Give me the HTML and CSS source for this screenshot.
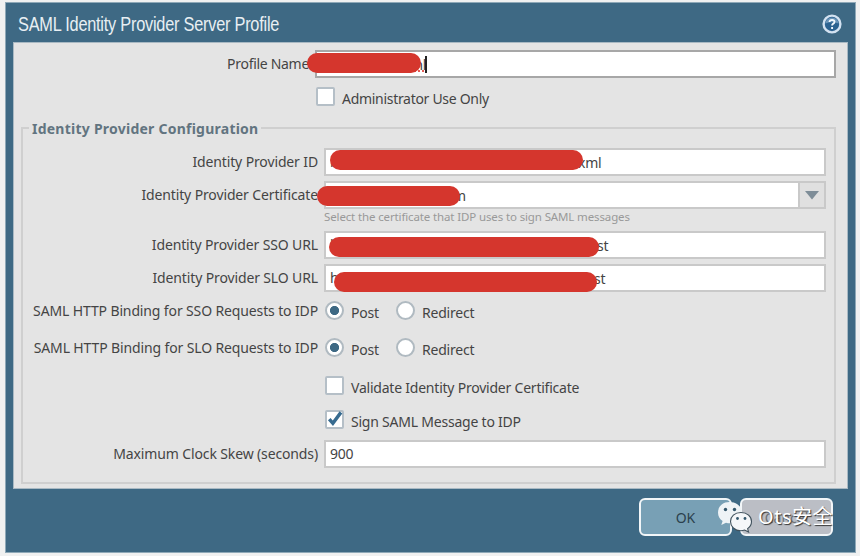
FILE: index.html
```html
<!DOCTYPE html>
<html lang="en">
<head>
<meta charset="utf-8">
<title>SAML Identity Provider Server Profile</title>
<link rel="stylesheet" href="styles.css">
</head>
<body>
<main class="dialog">
  <header class="titlebar">
    <h1><span class="title-text">SAML Identity Provider Server Profile</span></h1>
    <svg class="help" viewBox="0 0 20 20"><circle cx="10" cy="10" r="8.4" fill="#2b6290" stroke="#d3e2f1" stroke-width="2.4"/><path d="M3.400 9.500Q4 3.600 10 3.400 16 3.600 16.600 9.500 10 7 3.400 9.500" fill="#7fa6c6" opacity=".75"/><path d="M7.500 8Q7.700 5.900 10.100 5.900 12.600 6 12.500 8 12.400 9.200 11 9.900 10.100 10.400 10.100 11.600M10.100 13.100v1.800" fill="none" stroke="#f2f8fd" stroke-width="1.900"/></svg>
  </header>
  <section class="body">
    <div class="row profile">
      <label>Profile Name</label>
      <div class="field focus"><span class="tail t-profile">ml</span><i class="caret"></i><i class="squiggle"></i><i class="redact r-profile"></i></div>
    </div>
    <div class="row admin"><i class="box"></i><span class="opt">Administrator Use Only</span></div>
    <div class="group">
      <div class="legend"><span>Identity Provider Configuration</span></div>
      <div class="row id"><label>Identity Provider ID</label><div class="field"><span>h</span><span class="tail t-id">xml</span><i class="redact r-id"></i></div></div>
      <div class="row cert"><label>Identity Provider Certificate</label><div class="field"><span class="tail t-cert">m</span><i class="redact r-cert"></i><span class="trigger"><svg viewBox="0 0 14 9"><path d="M0 0h14L7 8.5z" fill="#7e8d98"/></svg></span></div></div>
      <div class="hint">Select the certificate that IDP uses to sign SAML messages</div>
      <div class="row sso"><label>Identity Provider SSO URL</label><div class="field"><span>h</span><span class="tail t-sso">st</span><i class="redact r-sso"></i></div></div>
      <div class="row slo"><label>Identity Provider SLO URL</label><div class="field"><span>h</span><span class="tail t-slo">st</span><i class="redact r-slo"></i></div></div>
      <div class="row radio1"><label>SAML HTTP Binding for SSO Requests to IDP</label><div class="options"><i class="radio on"></i><span class="opt post">Post</span><i class="radio"></i><span class="opt">Redirect</span></div></div>
      <div class="row radio2"><label>SAML HTTP Binding for SLO Requests to IDP</label><div class="options"><i class="radio on"></i><span class="opt post">Post</span><i class="radio"></i><span class="opt">Redirect</span></div></div>
      <div class="row check1"><label></label><div class="options"><i class="box"></i><span class="opt">Validate Identity Provider Certificate</span></div></div>
      <div class="row check2"><label></label><div class="options"><i class="box"><svg viewBox="0 0 20 20"><path d="M4.5 9.5 8.3 14 16.8 2.5" fill="none" stroke="#376b90" stroke-width="3.6"/></svg></i><span class="opt">Sign SAML Message to IDP</span></div></div>
      <div class="row skew"><label>Maximum Clock Skew (seconds)</label><div class="field"><span>900</span></div></div>
    </div>
  </section>
  <footer class="actions">
    <div class="button ok">OK</div>
    <div class="button cancel">Cancel</div>
    <div class="watermark">
      <svg viewBox="0 0 36 32"><path d="M12.5 1C5.5 1 1 5.6 1 11.5c0 3.8 1.8 6.7 4.6 8.5L4.3 24l4.7-2.3c1.2.4 2.7.5 4 .5C20 22 25 17.5 25 11.5S19.500 1 12.500 1z" fill="#eef3f6"/><path d="M24 11.500C17.600 11.500 13.500 15.500 13.500 20.500s4.100 9.200 10.300 9.200c1.400 0 2.700-.2 3.800-.6l4 2-1-3.500c2.500-1.700 3.900-4.200 3.900-7.100 0-5-4.300-9-10.500-9z" fill="#f5f7f9" stroke="#40515c" stroke-width="1.100"/><g fill="#34576c"><circle cx="8.500" cy="8.500" r="1.700"/><circle cx="17.500" cy="8.500" r="1.700"/><circle cx="20.500" cy="17.500" r="1.400"/><circle cx="28" cy="17.500" r="1.400"/></g></svg>
      <span>Ots安全</span>
    </div>
  </footer>
</main>
</body>
</html>
```

FILE: styles.css
```css
* { box-sizing: border-box; }
body { margin: 0; height: 556px; overflow: hidden; background: #f0f1f1; padding: 2px 0 0 5px; font: 14px/20px "Noto Sans", sans-serif; color: #444; }
i { display: block; font-style: normal; flex: none; }
svg { display: block; }
.dialog { width: 851px; height: 551px; background: #3e6984; border: 1px solid #8fa9b8; }
.titlebar { height: 39px; display: flex; align-items: center; justify-content: space-between; padding: 2px 13px 0 12px; }
h1 { margin: 0; font: 20.5px/26px "Liberation Sans", sans-serif; color: #e8eff3; white-space: nowrap; }
.title-text { display: block; letter-spacing: -.3px; transform: scaleX(.797); transform-origin: left; }
.help { width: 20px; height: 20px; }
.body { margin: 0 7px; height: 447px; background: #e4e4e4; border: 1px solid #a9b9c3; padding: 7px 11px 0 7px; }
.row { display: flex; align-items: center; white-space: nowrap; }
label { width: 295px; margin-right: 6px; text-align: right; letter-spacing: -.13px; flex: none; }
.field { position: relative; flex: 1; height: 28px; background: #fff; border: 2px solid #c9c9c9; display: flex; align-items: center; padding-left: 4px; letter-spacing: -.25px; }
.profile label { width: 288px; margin-right: 6px; letter-spacing: -.3px; }
.profile .field { border-color: #a7a7a7; }
.admin { margin: 8px 0 0 295px; height: 20px; }
.box { width: 19px; height: 19px; background: #fff; border: 2px solid #b5bfc7; border-radius: 2px; }
.box svg { width: 19px; height: 19px; margin: -2px; }
.opt { margin-left: 7px; padding-top: 5px; letter-spacing: -.22px; }
.admin .opt { letter-spacing: -.3px; }
.group { height: 357px; margin-top: 21px; border: 2px solid #cfcfcf; padding: 0 8px 0 0; }
.legend { height: 22px; margin: -10px 0 0 6px; display: flex; }
.legend span { background: #e4e4e4; padding: 0 3px; color: #627480; font-weight: 700; letter-spacing: .24px; }
.id { margin-top: 7px; }
.cert { margin-top: 5px; }
.trigger { position: absolute; right: 0; top: 0; width: 26px; height: 24px; background: #e0e0e0; border-left: 2px solid #c9c9c9; display: flex; align-items: center; justify-content: center; }
.trigger svg { width: 14px; height: 9px; }
.hint { height: 17px; margin-left: 301px; font-size: 11.5px; line-height: 16px; color: #999; letter-spacing: -.13px; white-space: nowrap; }
.sso { margin-top: 5px; }
.slo { margin-top: 5px; }
.radio1 { height: 20px; margin-top: 9px; }
.radio2 { height: 20px; margin-top: 17px; }
.radio1 .opt, .radio2 .opt { padding-top: 3px; }
.check1 { height: 20px; margin-top: 17px; }
.check2 { height: 20px; margin-top: 14px; }
.skew { margin-top: 11px; }
.options { display: flex; align-items: center; padding-left: 1px; }
.radio { width: 19px; height: 19px; margin-top: -1px; border-radius: 50%; background: #fff; border: 2px solid #b0bac1; }
.radio.on { background: radial-gradient(circle, #3e6984 4.2px, #fff 5px); }
.post { width: 45px; }
.tail { position: absolute; top: 3px; }
.redact { position: absolute; height: 20px; border-radius: 10px; background: #d5362d; z-index: 1; }
.t-profile { left: 93px; }
.caret { position: absolute; left: 108px; top: 4px; width: 2px; height: 17px; background: #222; }
.squiggle { position: absolute; left: 82px; top: 18px; width: 25px; border-bottom: 2px dotted #e45b55; }
.r-profile { left: -10px; top: 1px; width: 114px; }
.t-id { left: 252px; }
.r-id { left: 4px; top: 0; width: 253px; }
.t-cert { left: 127px; }
.r-cert { left: -9px; top: 3px; width: 143px; }
.t-sso { left: 271px; }
.r-sso { left: 3px; top: 4px; width: 270px; }
.t-slo { left: 268px; }
.r-slo { left: 8px; top: 6px; width: 263px; }
.actions { position: relative; display: flex; justify-content: flex-end; gap: 8px; padding: 9px 22px 0 0; }
.button { width: 93px; height: 38px; border: 2px solid #f2f6f8; border-radius: 6px; text-align: center; line-height: 35px; background: #78a0b5; color: #2b414d; }
.cancel { background: #bbbec5; color: #6d7175; }
.watermark { position: absolute; right: 22px; top: 11px; height: 34px; display: flex; align-items: center; color: #fff; font: 20px/32px "Noto Sans", "Noto Sans CJK SC", sans-serif; text-shadow: 1px 1px 1px #333; white-space: nowrap; }
.watermark span { letter-spacing: .5px; }
.watermark svg { width: 36px; height: 32px; margin-right: 5px; }
```
